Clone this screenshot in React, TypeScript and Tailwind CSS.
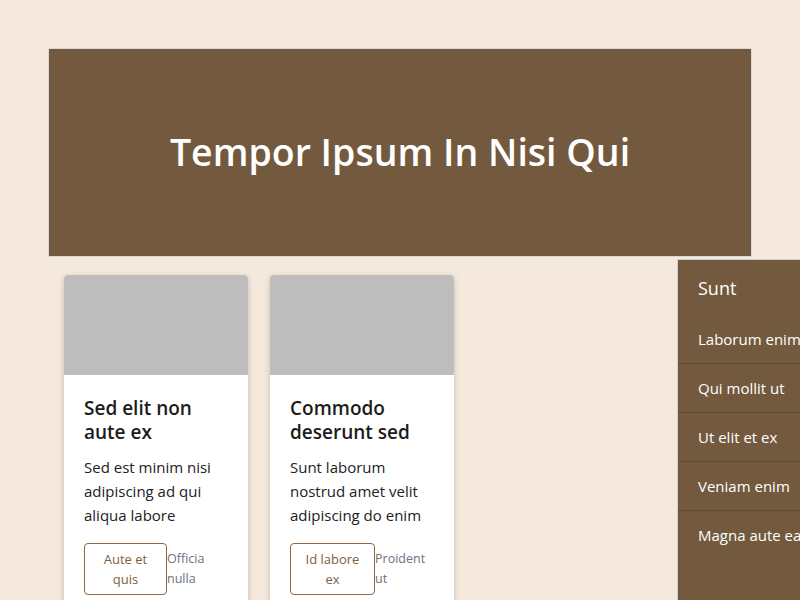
import React from "react";

const font = { fontFamily: '"Open Sans", "Noto Sans", sans-serif' };

function Card({ title, body, btn, btnW, note }: { title: string; body: string; btn: string; btnW: string; note: string }) {
  return (
    <div className="w-[184px] shrink-0 rounded-[4px] bg-white shadow-[0_2px_6px_rgba(0,0,0,0.18)] overflow-hidden">
      <div className="h-[100px] bg-[#bdbdbd]" />
      <div className="px-5 pt-[21px] pb-5">
        <h3 className="text-[19px] leading-[24px] font-semibold text-[#1c1c1c]">{title}</h3>
        <p className="mt-[11px] text-[15px] leading-[24px] text-[#222]">{body}</p>
        <div className="mt-[16px] flex items-start">
          <button className={`${btnW} shrink-0 rounded-[4px] border border-[#8a6a45] px-2 py-[5px] text-[13px] leading-[20px] text-[#7d5f3e]`}>
            {btn}
          </button>
          <span className="pt-[6px] text-[12.5px] leading-[20px] text-[#6b7280]">{note}</span>
        </div>
      </div>
    </div>
  );
}

export default function App() {
  const items = ["Laborum enim", "Qui mollit ut", "Ut elit et ex", "Veniam enim", "Magna aute ea"];
  return (
    <div style={font} className="w-[800px] h-[600px] overflow-hidden bg-[#f5e8dc] pt-12">
      <div className="mx-12 h-[209px] border border-[#d9d9d9] bg-[#735a3e] flex items-center justify-center">
        <h1 className="text-[37.5px] font-semibold text-white">Tempor Ipsum In Nisi Qui</h1>
      </div>
      <div className="flex items-start">
        <div className="flex gap-[22px] pl-16 pt-[18px]">
          <Card title="Sed elit non aute ex" body="Sed est minim nisi adipiscing ad qui aliqua labore" btn="Aute et quis" btnW="w-[83px]" note="Officia nulla" />
          <Card title="Commodo deserunt sed" body="Sunt laborum nostrud amet velit adipiscing do enim" btn="Id labore ex" btnW="w-[85px]" note="Proident ut" />
        </div>
        <div className="ml-auto mt-[2px] mr-[-121px] w-[244px] h-[400px] shrink-0 border-l border-t border-[#d0d0d0] bg-[#735a3e] text-white">
          <div className="px-5 pt-4 pb-[15px] text-[18px] leading-[24px]">Sunt</div>
          {items.map((t, i) => (
            <div key={t} className={`px-5 py-3 text-[15px] leading-[24px] whitespace-nowrap ${i < items.length - 1 ? "border-b border-[#5f4a33]" : ""}`}>
              {t}
            </div>
          ))}
        </div>
      </div>
    </div>
  );
}
